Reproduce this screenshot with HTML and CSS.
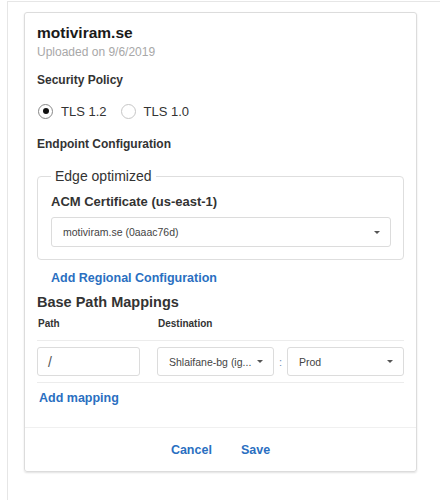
FILE: index.html
```html
<!DOCTYPE html>
<html lang="en">
<head>
    <meta charset="UTF-8">
    <title>Custom Domain</title>
    <link rel="stylesheet" href="styles.css">
</head>
<body>
    <div class="frame">
        <div class="card">
            <div class="card-body">
                <h1 class="title">motiviram.se</h1>
                <div class="subtitle">Uploaded on 9/6/2019</div>

                <div class="label">Security Policy</div>
                <div class="radios">
                    <span class="radio checked"></span><span class="radio-text">TLS 1.2</span>
                    <span class="radio"></span><span class="radio-text">TLS 1.0</span>
                </div>

                <div class="label endpoint">Endpoint Configuration</div>
                <fieldset class="group">
                    <legend>Edge optimized</legend>
                    <div class="label acm">ACM Certificate (us-east-1)</div>
                    <div class="select wide">
                        <span class="select-text">motiviram.se (0aaac76d)</span>
                        <span class="caret"></span>
                    </div>
                </fieldset>

                <a class="link regional">Add Regional Configuration</a>

                <h2 class="section-title">Base Path Mappings</h2>
                <div class="map-head">
                    <span>Path</span>
                    <span>Destination</span>
                </div>
                <div class="map-row">
                    <div class="input">/</div>
                    <div class="select api">
                        <span class="select-text">Shlaifane-bg (ig...</span>
                        <span class="caret"></span>
                    </div>
                    <span class="colon">:</span>
                    <div class="select">
                        <span class="select-text">Prod</span>
                        <span class="caret"></span>
                    </div>
                </div>
                <a class="link add-mapping">Add mapping</a>
            </div>
            <div class="card-footer">
                <a class="link">Cancel</a>
                <a class="link">Save</a>
            </div>
        </div>
    </div>
</body>
</html>
```

FILE: styles.css
```css
body {
    margin: 0;
    font-family: "Liberation Sans", Arial, sans-serif;
    color: #222;
    background: #fff;
}
.frame {
    margin: 1px 0 0 7px;
    padding: 10px 0 30px 16px;
    border-top: 1px solid #e6e6e6;
    border-left: 1px solid #e6e6e6;
    height: 500px;
    box-sizing: border-box;
}
.card {
    width: 393px;
    box-sizing: border-box;
    border: 1px solid #dcdcdc;
    border-radius: 3px;
    box-shadow: 0 1px 2px rgba(0, 0, 0, 0.12);
}
.card-body {
    padding: 10px 12px 20px;
}
.title {
    margin: 0;
    font-size: 15.5px;
    line-height: 20px;
    font-weight: bold;
    color: #1a1a1a;
}
.subtitle {
    font-size: 12px;
    line-height: 18px;
    color: #a8a8a8;
}
.label {
    margin-top: 10px;
    font-size: 12px;
    line-height: 18px;
    font-weight: bold;
    color: #333;
}
.radios {
    margin-top: 12px;
    display: flex;
    align-items: center;
    height: 20px;
    font-size: 13px;
    color: #333;
}
.radio {
    width: 13px;
    height: 13px;
    border: 1px solid #c6c6c6;
    border-radius: 50%;
    position: relative;
    margin-left: 1px;
}
.radio.checked {
    border-color: #888;
}
.radio.checked::after {
    content: "";
    position: absolute;
    left: 3.5px;
    top: 3.5px;
    width: 6px;
    height: 6px;
    border-radius: 50%;
    background: #111;
}
.radio-text {
    margin: 0 13px 0 8px;
}
.label.endpoint {
    margin-top: 14px;
}
.group {
    margin: 14px 0 0;
    padding: 0 12px 12px 13px;
    border: 1px solid #dedede;
    border-radius: 4px;
}
.group legend {
    padding: 0 4px;
    font-size: 14px;
    line-height: 18px;
    color: #333;
}
.label.acm {
    margin-top: 8px;
    font-size: 13px;
}
.select,
.input {
    height: 29px;
    box-sizing: border-box;
    border: 1px solid #dcdcdc;
    border-radius: 3px;
    display: flex;
    align-items: center;
    font-size: 10.5px;
    color: #444;
}
.select.wide {
    margin-top: 6px;
    height: 30px;
}
.select-text {
    flex: 1;
    padding-left: 11px;
    white-space: nowrap;
    overflow: hidden;
}
.caret {
    width: 0;
    height: 0;
    border-left: 3px solid transparent;
    border-right: 3px solid transparent;
    border-top: 3px solid #555;
    margin-right: 10px;
}
.link {
    font-size: 12.5px;
    line-height: 18px;
    font-weight: bold;
    color: #2a6fc1;
    cursor: pointer;
}
.regional {
    display: block;
    margin: 9px 0 0 14px;
}
.section-title {
    margin: 5px 0 0;
    font-size: 14.5px;
    line-height: 20px;
    font-weight: bold;
    color: #333;
}
.map-head {
    margin-top: 5px;
    display: grid;
    grid-template-columns: 120px 1fr;
    font-size: 10px;
    line-height: 14px;
    font-weight: bold;
    color: #333;
    padding: 0 1px 9px;
}
.map-row {
    display: grid;
    grid-template-columns: 103px 134px 13px 117px;
    padding: 6px 0;
    border-top: 1px solid #ececec;
    border-bottom: 1px solid #ececec;
}
.map-row .api {
    margin-left: 17px;
}
.input {
    font-size: 14px;
    padding-left: 10px;
    color: #555;
}
.colon {
    align-self: center;
    text-align: center;
    font-size: 11px;
    color: #6d8fb8;
}
.add-mapping {
    display: block;
    margin: 6px 0 0 2px;
}
.card-footer {
    border-top: 1px solid #f0f0f0;
    height: 43px;
    display: flex;
    justify-content: center;
    align-items: center;
    gap: 29px;
}
.card-footer .link {
    font-size: 12.5px;
}
```
